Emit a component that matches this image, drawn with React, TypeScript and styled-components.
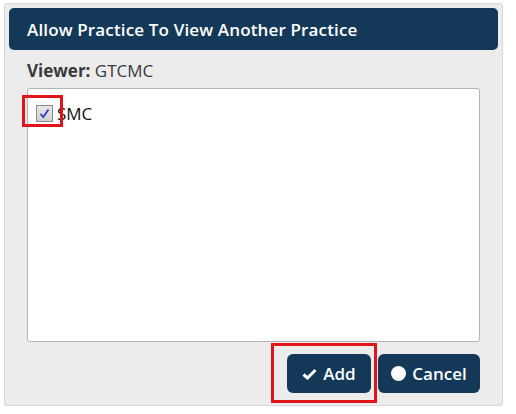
import React, { useState } from 'react';
import styled, { createGlobalStyle } from 'styled-components';

const GlobalStyle = createGlobalStyle`
  *, *::before, *::after {
    box-sizing: border-box;
  }

  body {
    margin: 0;
    background: #ffffff;
    font-family: 'Open Sans', 'DejaVu Sans', sans-serif;
  }
`;

const Page = styled.div`
  padding: 3px 0 0 4px;
`;

const Dialog = styled.div`
  width: 499px;
  height: 403px;
  background: #ececec;
  border: 1px solid #d6d6d6;
  border-radius: 3px;
  display: flex;
  flex-direction: column;
`;

const Header = styled.div`
  margin: 4px 4px 0 4px;
  height: 42px;
  background: #143958;
  border-radius: 5px;
  display: flex;
  align-items: center;
  padding-left: 18px;
  color: #ffffff;
  font-size: 17px;
  font-weight: 600;
  letter-spacing: 0.15px;
`;

const Body = styled.div`
  padding: 10px 22px 0 22px;
  display: flex;
  flex-direction: column;
`;

const ViewerLabel = styled.div`
  font-size: 17px;
  color: #3a3a3a;
  line-height: 22px;
  margin-bottom: 6px;

  b {
    font-weight: 700;
  }
`;

const ListBox = styled.div`
  height: 254px;
  background: #ffffff;
  border: 1px solid #b4b4b4;
  border-radius: 3px;
  padding: 13px 0 0 8px;
`;

const ItemRow = styled.label`
  display: flex;
  align-items: center;
  gap: 4px;
  font-size: 17px;
  color: #111;
  cursor: pointer;
`;

const Highlight = styled.span<{ $top: number; $right: number; $bottom: number; $left: number }>`
  position: relative;
  display: inline-flex;

  &::after {
    content: '';
    position: absolute;
    top: ${(p) => -p.$top}px;
    right: ${(p) => -p.$right}px;
    bottom: ${(p) => -p.$bottom}px;
    left: ${(p) => -p.$left}px;
    border: 3px solid #e3131c;
    pointer-events: none;
  }
`;

const CheckBox = styled.span`
  width: 17px;
  height: 17px;
  border: 1px solid #8a8a8a;
  background: linear-gradient(#e6e6e6, #d2d2d2);
  display: flex;
  align-items: center;
  justify-content: center;
`;

const Footer = styled.div`
  display: flex;
  justify-content: flex-end;
  gap: 7px;
  padding: 12px 22px 0 0;
`;

const Button = styled.button<{ $width: number }>`
  width: ${(p) => p.$width}px;
  height: 39px;
  background: #143958;
  border: none;
  border-radius: 6px;
  color: #ffffff;
  font-family: 'Open Sans', 'DejaVu Sans', sans-serif;
  font-size: 17px;
  font-weight: 600;
  display: flex;
  align-items: center;
  justify-content: center;
  gap: 6px;
  cursor: pointer;
`;

const Dot = styled.span`
  width: 15px;
  height: 15px;
  border-radius: 50%;
  background: #ffffff;
`;

const App: React.FC = () => {
  const [checked, setChecked] = useState(true);

  return (
    <Page>
      <GlobalStyle />
      <Dialog>
        <Header>Allow Practice To View Another Practice</Header>
        <Body>
          <ViewerLabel>
            <b>Viewer:</b> GTCMC
          </ViewerLabel>
          <ListBox>
            <ItemRow onClick={() => setChecked(!checked)}>
              <Highlight $top={10} $right={10} $bottom={5} $left={14}>
                <CheckBox>
                  {checked && (
                    <svg width="11" height="11" viewBox="0 0 11 11">
                      <path d="M1.5 6 L4.3 9 L9.5 1.5" fill="none" stroke="#2a3ec4" strokeWidth="1.8" />
                    </svg>
                  )}
                </CheckBox>
              </Highlight>
              SMC
            </ItemRow>
          </ListBox>
        </Body>
        <Footer>
          <Highlight $top={11} $right={6} $bottom={10} $left={16}>
            <Button $width={84}>
              <svg width="15" height="12" viewBox="0 0 15 12">
                <path d="M1.5 6.5 L5.5 10 L13.5 2" fill="none" stroke="#ffffff" strokeWidth="3" />
              </svg>
              Add
            </Button>
          </Highlight>
          <Button $width={102}>
            <Dot />
            Cancel
          </Button>
        </Footer>
      </Dialog>
    </Page>
  );
};

export default App;
